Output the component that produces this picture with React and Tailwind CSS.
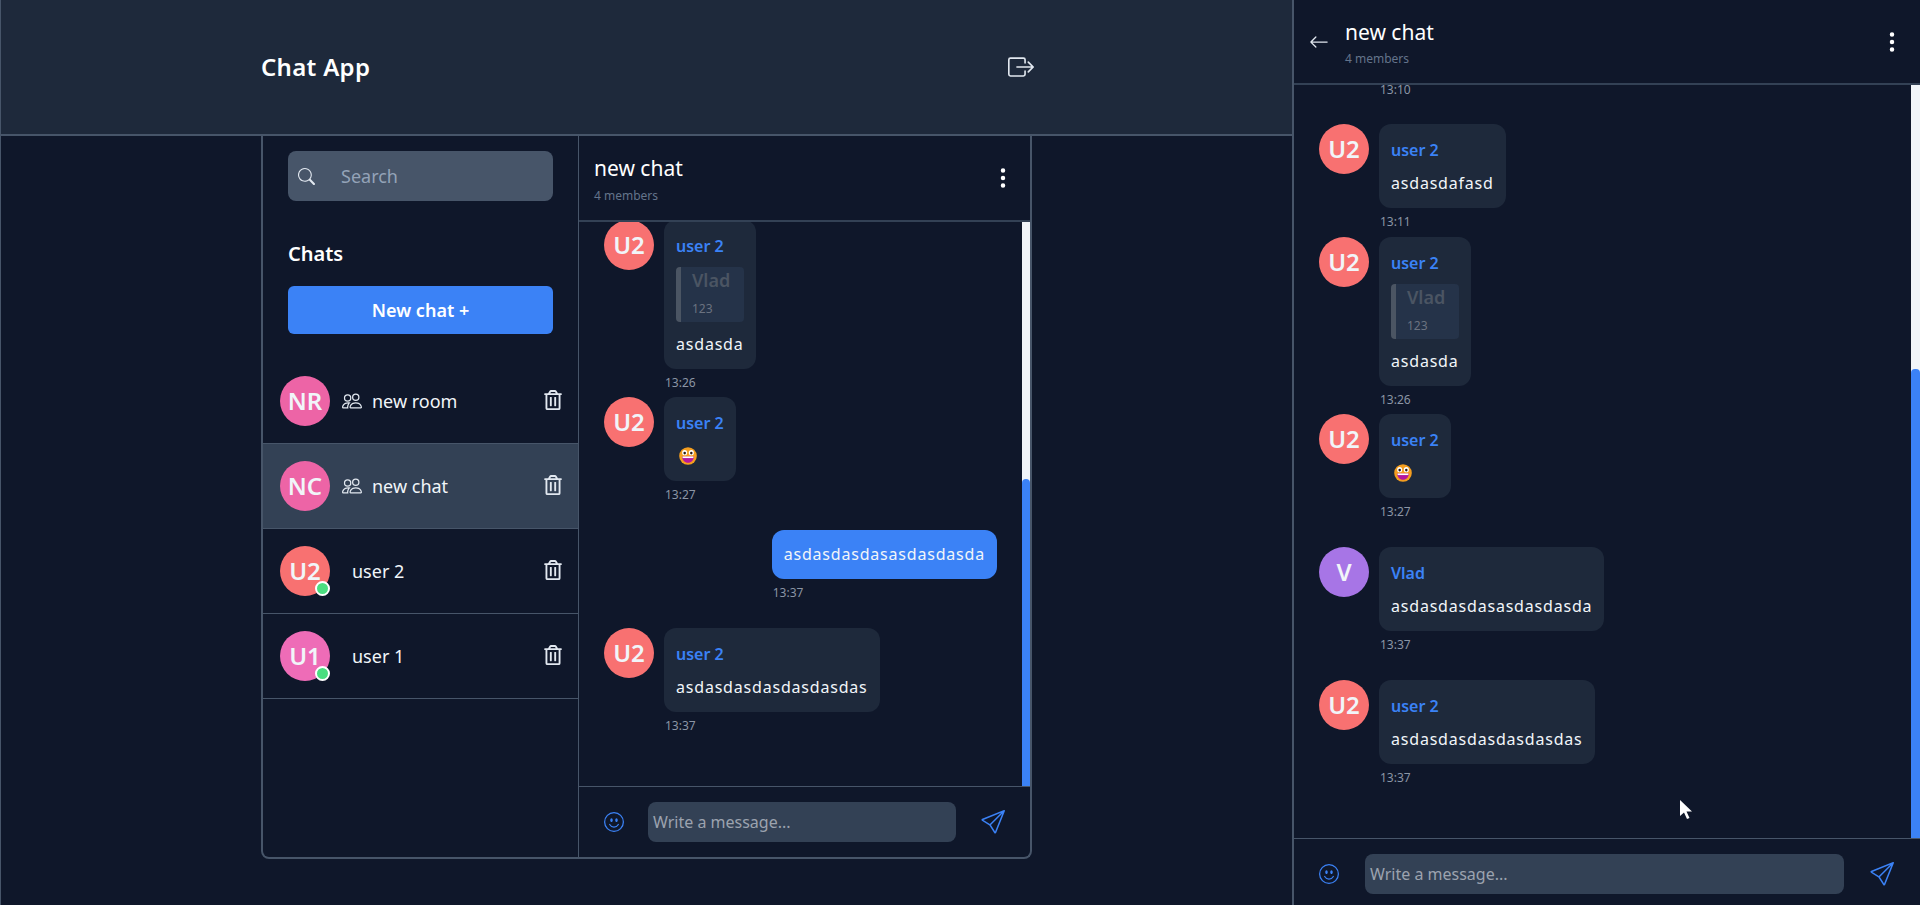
import React from "react";
import { BsThreeDotsVertical, BsArrowLeft, BsEmojiSmile, BsSend, BsBoxArrowRight, BsPeople, BsSearch } from "react-icons/bs";
import { FaRegTrashAlt } from "react-icons/fa";

const font = { fontFamily: '"Noto Sans", sans-serif' };

function Avatar({ text, color, dot }) {
  return (
    <div className={`relative flex h-[50px] w-[50px] shrink-0 items-center justify-center rounded-full text-[24px] font-semibold text-[#f1f5f9] ${color}`}>
      {text}
      {dot && <span className="absolute bottom-0 right-0 h-[15px] w-[15px] rounded-full border-2 border-white bg-[#4ade80]" />}
    </div>
  );
}

function Row({ text, avatar, color, group, dot, active }) {
  return (
    <div className={`flex h-[85px] items-center border-b border-[#475569] pl-[17px] pr-[15px] ${active ? "bg-[#334155]" : ""}`}>
      <Avatar text={avatar} color={color} dot={dot} />
      {group ? <BsPeople className="ml-3 h-5 w-5 text-[#e2e8f0]" /> : null}
      <span className={`flex-1 text-[18px] text-[#f1f5f9] ${group ? "ml-[10px]" : "ml-[22px]"}`}>{text}</span>
      <FaRegTrashAlt className="h-5 w-5 -translate-y-[1px] text-[#e2e8f0]" />
    </div>
  );
}

function Emoji() {
  return (
    <svg viewBox="0 0 20 20" className="ml-[3px] mb-[3px] mt-[10px] h-[18px] w-[18px]">
      <circle cx="10" cy="10" r="9.8" fill="#f59e1f" />
      <ellipse cx="6.300" cy="6.300" rx="2.800" ry="3" fill="#fff" />
      <ellipse cx="13.700" cy="6.300" rx="2.800" ry="3" fill="#fff" />
      <circle cx="6.300" cy="6.800" r="1.400" fill="#2a1a10" />
      <circle cx="13.700" cy="6.800" r="1.400" fill="#2a1a10" />
      <path d="M3.500 10.500h13c0 4-2.800 7-6.500 7s-6.500-3-6.500-7z" fill="#b5179e" />
      <path d="M4 10.500h12v1.800H4z" fill="#fff" />
    </svg>
  );
}

function Time({ children, tight }) {
  return <div className={`mt-[6px] pl-[1px] text-[12px] leading-[16px] text-[#8b95a5] ${tight ? "h-[22px]" : "h-[23px]"}`}>{children}</div>;
}

function Bubble({ name, avatar, color, children, time, gap, tight }) {
  return (
    <div className={`flex gap-[10px] ${gap ? "mb-5" : ""}`}>
      <Avatar text={avatar} color={color} />
      <div>
        <div className="w-fit rounded-xl bg-[#1e293b] px-3 pb-[13px] pt-3">
          <div className="text-[16px] font-semibold leading-[28px] text-[#3b82f6]">{name}</div>
          {children}
        </div>
        <Time tight={tight}>{time}</Time>
      </div>
    </div>
  );
}

const Text = ({ children }) => <div className="mt-[7px] text-[16px] leading-[24px] tracking-[0.8px] text-[#f1f5f9]">{children}</div>;

const Reply = () => (
  <>
    <div className="mt-[7px] flex h-[55px] w-[68px] flex-col rounded-sm border-l-[5px] border-[#4b5563] bg-[#253349] pl-[11px]">
      <div className="text-[18px] font-semibold leading-[26px] text-[#4b5563]">Vlad</div>
      <div className="mt-2 text-[12px] leading-[16px] text-[#6b7280]">123</div>
    </div>
    <div className="mt-[10px] text-[16px] leading-[24px] tracking-[0.8px] text-[#f1f5f9]">asdasda</div>
  </>
);

function Own({ text }) {
  return (
    <div className="mb-5 ml-auto mr-[25px] w-fit">
      <div className="rounded-xl bg-[#3b82f6] px-3 py-3 text-[16px] leading-[25px] tracking-[0.8px] text-[#f1f5f9]">{text}</div>
      <Time>13:37</Time>
    </div>
  );
}

function Scroll({ thumbTop, width }) {
  return (
    <div className={`flex shrink-0 flex-col bg-[#f1f5f9] ${width}`}>
      <div className={thumbTop} />
      <div className="flex-1 rounded-t-sm bg-[#3b82f6]" />
    </div>
  );
}

function Composer({ box, gap, sendGap }) {
  return (
    <div className={`flex items-start border-t border-[#475569] pl-[25px] pt-[15px] ${box}`}>
      <BsEmojiSmile className="mt-[10px] h-5 w-5 shrink-0 text-[#3b82f6]" />
      <div className={`flex h-10 flex-1 items-center rounded-lg bg-[#334155] pl-[5px] text-[16px] text-[#9ca3af] ${gap}`}>Write a message...</div>
      <BsSend className={`mt-[8px] h-6 w-6 shrink-0 text-[#3b82f6] ${sendGap}`} />
    </div>
  );
}

const red = "bg-[#f87171]";

export default function App() {
  return (
    <div style={font} className="flex h-[905px] overflow-hidden bg-[#0f172a] text-white">
      <div className="flex w-[1292px] flex-col border-l border-[#475569]">
        <header className="flex h-[136px] shrink-0 items-center justify-between border-b-2 border-[#475569] bg-[#1e293b] pl-[260px] pr-[258px]">
          <div className="text-[24px] font-semibold tracking-[0.3px]">Chat App</div>
          <BsBoxArrowRight className="h-[26px] w-[26px] text-[#e2e8f0]" />
        </header>
        <main className="flex justify-center">
          <div className="flex h-[723px] w-[771px] overflow-hidden rounded-b-lg border-x-2 border-b-2 border-[#475569]">
            <aside className="w-[316px] shrink-0 border-r border-[#475569]">
              <div className="px-[25px] pt-[15px]">
                <div className="flex h-[50px] items-center rounded-lg bg-[#475569] pl-[10px] text-[18px] text-[#94a3b8]">
                  <BsSearch className="h-[17px] w-[17px] text-[#e2e8f0]" />
                  <span className="ml-[26px]">Search</span>
                </div>
                <div className="mt-[38px] text-[20px] font-semibold leading-[30px]">Chats</div>
                <div className="mt-[17px] flex h-12 items-center justify-center rounded-md bg-[#3b82f6] text-[18px] font-semibold">New chat +</div>
              </div>
              <div className="mt-[25px]">
                <Row text="new room" avatar="NR" color="bg-[#ed64a6]" group />
                <Row text="new chat" avatar="NC" color="bg-[#ed64a6]" group active />
                <Row text="user 2" avatar="U2" color={red} dot />
                <Row text="user 1" avatar="U1" color="bg-[#ee6cb7]" dot />
              </div>
            </aside>
            <section className="flex min-w-0 flex-1 flex-col">
              <div className="flex h-[86px] shrink-0 items-center justify-between border-b-2 border-[#334155] pl-[15px] pr-[15px]">
                <div>
                  <div className="text-[21px] leading-[30px]">new chat</div>
                  <div className="mt-[5px] text-[12px] leading-[16px] text-[#64748b]">4 members</div>
                </div>
                <BsThreeDotsVertical className="h-6 w-6 text-white" />
              </div>
              <div className="flex min-h-0 flex-1">
                <div className="min-w-0 flex-1 overflow-hidden pl-[25px]">
                  <div className="-mt-[2px]">
                    <Bubble name="user 2" avatar="U2" color={red} time="13:26" tight><Reply /></Bubble>
                    <Bubble name="user 2" avatar="U2" color={red} time="13:27" gap><Emoji /></Bubble>
                    <Own text="asdasdasdasasdasdasda" />
                    <Bubble name="user 2" avatar="U2" color={red} time="13:37" gap><Text>asdasdasdasdasdasdas</Text></Bubble>
                  </div>
                </div>
                <Scroll thumbTop="h-[257px]" width="w-2" />
              </div>
              <Composer box="h-[71px] pr-[25px]" gap="ml-[24px]" sendGap="ml-[25px]" />
            </section>
          </div>
        </main>
      </div>
      <div className="relative flex flex-1 flex-col border-l-2 border-[#475569]">
        <div className="flex h-[85px] shrink-0 items-center border-b-2 border-[#334155] pl-[15px] pr-[16px]">
          <BsArrowLeft className="h-5 w-5 text-[#e2e8f0]" />
          <div className="ml-4 flex-1">
            <div className="text-[21px] leading-[30px]">new chat</div>
            <div className="mt-[4px] text-[12px] leading-[16px] text-[#64748b]">4 members</div>
          </div>
          <BsThreeDotsVertical className="h-6 w-6 text-white" />
        </div>
        <div className="flex min-h-0 flex-1">
          <div className="min-w-0 flex-1 overflow-hidden pl-[25px]">
            <div className="ml-[61px] h-[39px] text-[12px] leading-[10px] text-[#8b95a5]">13:10</div>
            <Bubble name="user 2" avatar="U2" color={red} time="13:11"><Text>asdasdafasd</Text></Bubble>
            <Bubble name="user 2" avatar="U2" color={red} time="13:26" tight><Reply /></Bubble>
            <Bubble name="user 2" avatar="U2" color={red} time="13:27" gap><Emoji /></Bubble>
            <Bubble name="Vlad" avatar="V" color="bg-[#a775e6]" time="13:37" gap><Text>asdasdasdasasdasdasda</Text></Bubble>
            <Bubble name="user 2" avatar="U2" color={red} time="13:37" gap><Text>asdasdasdasdasdasdas</Text></Bubble>
          </div>
          <Scroll thumbTop="h-[284px]" width="w-[9px]" />
        </div>
        <Composer box="h-[67px] pr-[26px]" gap="ml-[26px]" sendGap="ml-[26px]" />
        <svg viewBox="0 0 14 21" className="absolute left-[385px] top-[799px] h-[21px] w-[14px]">
          <path d="M1 1v16l4-3.500 3 6.500 2.500-1-3-6.500h5.500z" fill="#fff" />
        </svg>
      </div>
    </div>
  );
}
